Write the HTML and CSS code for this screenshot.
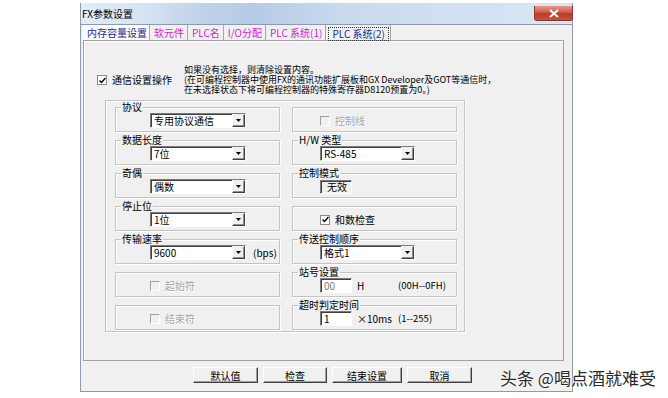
FILE: index.html
```html
<!DOCTYPE html>
<html>
<head>
    <meta charset="utf-8">
    <title>FX参数设置</title>
    <link rel="stylesheet" href="styles.css">
</head>
<body>
    <div class="window">
        <div class="titlebar">
            <span class="title">FX参数设置</span>
            <span class="close">
                <svg width="10" height="9" viewBox="0 0 10 9"><path d="M1 1 L9 8 M9 1 L1 8" stroke="#fff" stroke-width="2"/></svg>
            </span>
        </div>
        <div class="client">
            <div class="tabs">
                <span class="tab tab-first">内存容量设置</span>
                <span class="tab">软元件</span>
                <span class="tab">PLC名</span>
                <span class="tab">I/O分配</span>
                <span class="tab">PLC 系统(1)</span>
                <span class="tab tab-active"><span class="focus">PLC 系统(2)</span></span>
            </div>
            <div class="panel">
                <div class="intro">
                    <div class="check"><span class="box"><svg width="7" height="7" viewBox="0 0 7 7"><path d="M0.5 3.5 L2.5 5.5 L6.5 1" stroke="#000" stroke-width="1.4" fill="none"/></svg></span>通信设置操作</div>
                    <div class="note">
                        <div>如果没有选择，则清除设置内容。</div>
                        <div>(在可编程控制器中使用FX的通讯功能扩展板和GX Developer及GOT等通信时，</div>
                        <div>在未选择状态下将可编程控制器的特殊寄存器D8120预置为0。)</div>
                    </div>
                </div>
                <div class="settings">
                    <div class="col">
                        <div class="group">
                            <span class="legend">协议</span>
                            <div class="combo"><span class="value">专用协议通信</span><span class="arrow"><svg width="5" height="3" viewBox="0 0 5 3"><path d="M0 0 H5 L2.5 3 Z"/></svg></span></div>
                        </div>
                        <div class="group">
                            <span class="legend">数据长度</span>
                            <div class="combo"><span class="value">7位</span><span class="arrow"><svg width="5" height="3" viewBox="0 0 5 3"><path d="M0 0 H5 L2.5 3 Z"/></svg></span></div>
                        </div>
                        <div class="group">
                            <span class="legend">奇偶</span>
                            <div class="combo"><span class="value">偶数</span><span class="arrow"><svg width="5" height="3" viewBox="0 0 5 3"><path d="M0 0 H5 L2.5 3 Z"/></svg></span></div>
                        </div>
                        <div class="group">
                            <span class="legend">停止位</span>
                            <div class="combo"><span class="value">1位</span><span class="arrow"><svg width="5" height="3" viewBox="0 0 5 3"><path d="M0 0 H5 L2.5 3 Z"/></svg></span></div>
                        </div>
                        <div class="group">
                            <span class="legend">传输速率</span>
                            <div class="combo"><span class="value">9600</span><span class="arrow"><svg width="5" height="3" viewBox="0 0 5 3"><path d="M0 0 H5 L2.5 3 Z"/></svg></span></div>
                            <span class="unit-bps">(bps)</span>
                        </div>
                        <div class="group">
                            <div class="check disabled"><span class="box"></span>起始符</div>
                        </div>
                        <div class="group">
                            <div class="check disabled"><span class="box"></span>结束符</div>
                        </div>
                    </div>
                    <div class="col col-right">
                        <div class="group">
                            <div class="check disabled"><span class="box"></span>控制线</div>
                        </div>
                        <div class="group">
                            <span class="legend">H/W 类型</span>
                            <div class="combo"><span class="value">RS-485</span><span class="arrow"><svg width="5" height="3" viewBox="0 0 5 3"><path d="M0 0 H5 L2.5 3 Z"/></svg></span></div>
                        </div>
                        <div class="group">
                            <span class="legend">控制模式</span>
                            <div class="readonly">无效</div>
                        </div>
                        <div class="group">
                            <div class="check"><span class="box"><svg width="7" height="7" viewBox="0 0 7 7"><path d="M0.5 3.5 L2.5 5.5 L6.5 1" stroke="#000" stroke-width="1.4" fill="none"/></svg></span>和数检查</div>
                        </div>
                        <div class="group">
                            <span class="legend">传送控制顺序</span>
                            <div class="combo"><span class="value">格式1</span><span class="arrow"><svg width="5" height="3" viewBox="0 0 5 3"><path d="M0 0 H5 L2.5 3 Z"/></svg></span></div>
                        </div>
                        <div class="group">
                            <span class="legend">站号设置</span>
                            <div class="field field-dim">00</div>
                            <span class="unit">H</span>
                            <span class="range">(00H--0FH)</span>
                        </div>
                        <div class="group">
                            <span class="legend">超时判定时间</span>
                            <div class="field">1</div>
                            <span class="unit">×10ms</span>
                            <span class="range">(1--255)</span>
                        </div>
                    </div>
                </div>
            </div>
            <div class="buttons">
                <span class="btn btn-default">默认值</span>
                <span class="btn btn-check">检查</span>
                <span class="btn btn-end">结束设置</span>
                <span class="btn btn-cancel">取消</span>
            </div>
        </div>
    </div>
    <div class="watermark">头条 @喝点酒就难受</div>
</body>
</html>
```

FILE: styles.css
```css
body {
    margin: 0;
    background-color: #fff;
    font-family: "Noto Sans CJK SC", "DejaVu Sans", sans-serif;
    font-size: 10px;
    line-height: 1;
    color: #000;
}
.window {
    width: 491px;
    margin: 3px 0 0 80px;
    border: 1px solid #8d9aab;
    border-top: none;
    background-color: #f0f0f0;
}
.titlebar {
    height: 21px;
    display: flex;
    justify-content: space-between;
    align-items: flex-start;
    background: linear-gradient(to right, #e3ecf7 0%, #d7e4f3 12%, #bfd2ea 25%, #b6cbe6 35%, #cadbef 55%, #d2e1f2 80%, #dae7f5 100%);
    border-bottom: 1px solid #8d9aab;
}
.title {
    margin: 6px 0 0 1px;
    font-size: 10px;
}
.close {
    width: 37px;
    height: 14px;
    margin: 3px -1px 0 0;
    display: flex;
    align-items: center;
    justify-content: center;
    border: 1px solid #8a3a30;
    border-top: none;
    border-radius: 0 0 3px 3px;
    background: linear-gradient(#e69a8c, #d05a48 45%, #bd3a25 55%, #c9523c);
}
.tabs {
    height: 15px;
    display: flex;
    align-items: stretch;
    padding-left: 2px;
    white-space: nowrap;
}
.tab {
    display: flex;
    align-items: center;
    padding: 1px 3px 0 4px;
    border-right: 1px solid #a8a8a8;
    color: #d21fd0;
}
.tab-first {
    color: #1d2a8c;
    padding: 1px 2px 0 4px;
    background-color: #fbfbfb;
}
.tab-active {
    color: #1d2a8c;
    padding: 2px 1px 0 2px;
    background-color: #f0f0f0;
}
.focus {
    padding: 1px 3px;
    border: 1px dotted #333;
}
.panel {
    height: 319px;
    margin: 0 8px 0 2px;
    border: 1px solid #a0a0a0;
    box-shadow: inset 1px 1px #fff;
}
.intro {
    display: flex;
    align-items: center;
    padding: 24px 0 0 13px;
    white-space: nowrap;
}
.intro .check {
    flex: none;
}
.note {
    margin-left: 12px;
    font-size: 9px;
    line-height: 10px;
}
.check {
    display: flex;
    align-items: center;
    gap: 5px;
    white-space: nowrap;
}
.box {
    width: 8px;
    height: 8px;
    display: flex;
    align-items: center;
    justify-content: center;
    background-color: #fff;
    border: 1px solid #8a8a8a;
}
.check.disabled {
    color: #a6a6a6;
    text-shadow: 1px 1px #fff;
}
.check.disabled .box {
    background-color: #f0f0f0;
    border-color: #a0a0a0 #fff #fff #a0a0a0;
}
.settings {
    width: 360px;
    height: 232px;
    box-sizing: border-box;
    margin: 5px 0 0 21px;
    padding: 6px 7px 0 9px;
    display: flex;
    gap: 12px;
    border: 1px solid #c4c4c4;
    box-shadow: inset 1px 1px #fff, 1px 1px #fff;
}
.col {
    width: 165px;
    display: flex;
    flex-direction: column;
    gap: 8px;
}
.group {
    position: relative;
    height: 25px;
    box-sizing: border-box;
    display: flex;
    align-items: center;
    padding: 2px 0 0 34px;
    border: 1px solid #c4c4c4;
    box-shadow: inset 1px 1px #fff, 1px 1px #fff;
    white-space: nowrap;
}
.col-right .group {
    padding-left: 27px;
}
.legend {
    position: absolute;
    top: -6px;
    left: 5px;
    padding: 0 1px;
    background-color: #f0f0f0;
}
.combo {
    width: 96px;
    height: 15px;
    box-sizing: border-box;
    display: flex;
    align-items: stretch;
    justify-content: space-between;
    background-color: #fff;
    border: 1px solid;
    border-color: #7a7a7a #fff #fff #7a7a7a;
    box-shadow: inset 1px 1px #404040;
}
.col-right .combo {
    width: 95px;
}
.value {
    display: flex;
    align-items: center;
    padding: 1px 0 0 3px;
}
.arrow {
    width: 13px;
    display: flex;
    align-items: center;
    justify-content: center;
    box-sizing: border-box;
    background-color: #f0f0f0;
    border: 1px solid;
    border-color: #f0f0f0 #404040 #404040 #fff;
    box-shadow: inset -1px -1px #909090;
}
.unit-bps {
    margin-left: 7px;
}
.readonly,
.field {
    width: 32px;
    height: 14px;
    box-sizing: border-box;
    display: flex;
    align-items: center;
    padding: 1px 0 0 3px;
    border: 1px solid;
    border-color: #7a7a7a #fff #fff #7a7a7a;
    box-shadow: inset 1px 1px #404040;
}
.readonly {
    padding-left: 6px;
}
.field {
    height: 15px;
    background-color: #fff;
}
.field-dim {
    color: #777;
}
.unit {
    width: 41px;
    margin-left: 5px;
}
.range {
    font-size: 9.5px;
}
.buttons {
    display: flex;
    gap: 5px;
    padding: 6px 0 8px 112px;
}
.btn {
    height: 16px;
    box-sizing: border-box;
    display: flex;
    align-items: center;
    justify-content: center;
    padding-top: 1px;
    border: 1px solid;
    border-color: #fff #404040 #404040 #fff;
    box-shadow: inset -1px -1px #a0a0a0;
}
.btn-default { width: 65px; }
.btn-check { width: 64px; }
.btn-end { width: 70px; }
.btn-cancel { width: 65px; }
.watermark {
    position: absolute;
    left: 500px;
    top: 369px;
    font-size: 17px;
    color: #2a2a2a;
    text-shadow: 0 0 2px #fff, 0 0 2px #fff;
}
```
